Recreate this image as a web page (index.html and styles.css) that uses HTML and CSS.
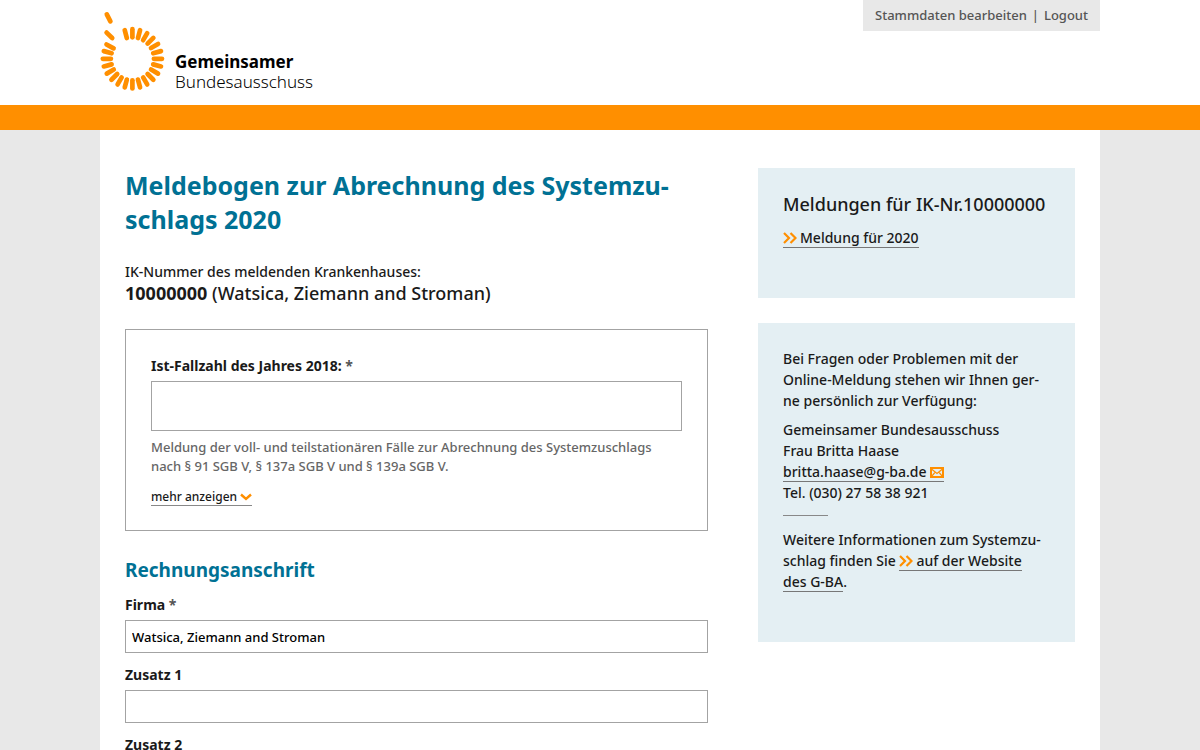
FILE: index.html
```
<!DOCTYPE html>
<html lang="de">
<head>
<meta charset="utf-8">
<meta name="viewport" content="width=device-width, initial-scale=1">
<title>Meldebogen zur Abrechnung des Systemzuschlags 2020</title>
<link rel="stylesheet" href="styles.css">
</head>
<body>
<header class="header">
  <div class="header-inner">
    <a class="logo" href="#">
      <svg class="logo-mark" viewBox="0 0 66 82" aria-hidden="true">
        <defs><path id="ray" d="M0-21.500V-29.600"/></defs>
        <g class="logo-rays" transform="translate(32.400 48.800)">
          <use href="#ray"/>
          <use href="#ray" transform="rotate(15)"/>
          <use href="#ray" transform="rotate(30)"/>
          <use href="#ray" transform="rotate(45)"/>
          <use href="#ray" transform="rotate(60)"/>
          <use href="#ray" transform="rotate(75)"/>
          <use href="#ray" transform="rotate(90)"/>
          <use href="#ray" transform="rotate(105)"/>
          <use href="#ray" transform="rotate(120)"/>
          <use href="#ray" transform="rotate(135)"/>
          <use href="#ray" transform="rotate(150)"/>
          <use href="#ray" transform="rotate(165)"/>
          <use href="#ray" transform="rotate(180)"/>
          <use href="#ray" transform="rotate(195)"/>
          <use href="#ray" transform="rotate(210)"/>
          <use href="#ray" transform="rotate(225)"/>
          <use href="#ray" transform="rotate(240)"/>
          <use href="#ray" transform="rotate(255)"/>
          <use href="#ray" transform="rotate(270)"/>
          <use href="#ray" transform="rotate(285)"/>
          <use href="#ray" transform="rotate(299)"/>
          <use href="#ray" transform="rotate(345)"/>
          <path d="M-20.200-20.800l-5.600-5.400M-22-37.400l-3.600-7"/>
        </g>
      </svg>
      <span class="logo-text"><strong>Gemeinsamer</strong><span>Bundesausschuss</span></span>
    </a>
    <nav class="meta-nav">
      <a href="#">Stammdaten bearbeiten</a><span>|</span><a href="#">Logout</a>
    </nav>
  </div>
</header>
<div class="page">
  <main class="content">
    <h1>Meldebogen zur Abrechnung des Systemzu&shy;schlags 2020</h1>
    <p class="hospital">IK-Nummer des meldenden Krankenhauses:
      <span class="hospital-name"><strong>10000000</strong> (Watsica, Ziemann and Stroman)</span></p>
    <form>
      <section class="case-box">
        <label for="cases">Ist-Fallzahl des Jahres 2018: <span class="required">*</span></label>
        <input class="tall" id="cases" type="text">
        <p class="hint">Meldung der voll- und teilstationären Fälle zur Abrechnung des Systemzuschlags nach § 91 SGB V, § 137a SGB V und § 139a SGB V.</p>
        <button class="more" type="button">mehr anzeigen <svg class="icon-down" viewBox="0 0 12 8" aria-hidden="true"><path d="M1 1.500l5 4.500 5-4.500"/></svg></button>
      </section>
      <h2>Rechnungsanschrift</h2>
      <div class="field">
        <label for="company">Firma <span class="required">*</span></label>
        <input id="company" type="text" value="Watsica, Ziemann and Stroman">
      </div>
      <div class="field">
        <label for="extra1">Zusatz 1</label>
        <input id="extra1" type="text">
      </div>
      <div class="field">
        <label for="extra2">Zusatz 2</label>
        <input id="extra2" type="text">
      </div>
    </form>
  </main>
  <aside class="sidebar">
    <section class="panel">
      <h3>Meldungen für IK-Nr.10000000</h3>
      <a class="link" href="#"><svg class="icon-next" viewBox="0 0 14 12" aria-hidden="true"><path d="M1 1l5 5-5 5M7.500 1l5 5-5 5"/></svg>Meldung für 2020</a>
    </section>
    <section class="panel">
      <p>Bei Fragen oder Problemen mit der Online-Meldung stehen wir Ihnen ger&shy;ne persönlich zur Verfügung:</p>
      <p>Gemeinsamer Bundesausschuss<br>Frau Britta Haase<br>
        <a class="link" href="#">britta.haase@g-ba.de <svg class="icon-mail" viewBox="0 0 14 11" aria-hidden="true"><path d="M1 1h12v9H1z"/><path class="flap" d="M1.500 2L7 6.500 12.500 2M1.500 9.500L5.200 5.200M12.500 9.500L8.800 5.200"/></svg></a><br>
        Tel. (030) 27 58 38 921</p>
      <hr>
      <p>Weitere Informationen zum Systemzu&shy;schlag finden Sie <a class="link" href="#"><svg class="icon-next" viewBox="0 0 14 12" aria-hidden="true"><path d="M1 1l5 5-5 5M7.500 1l5 5-5 5"/></svg>auf der Website des&nbsp;G-BA</a>.</p>
    </section>
  </aside>
</div>
</body>
</html>
```
FILE: styles.css
```
* { box-sizing: border-box; }
body {
  margin: 0;
  background: #e8e8e8;
  color: #1a1a1a;
  font: 500 14px/21px "Noto Sans", "Open Sans", sans-serif;
}
h1, h2, h3, p { margin: 0; }
a { color: inherit; text-decoration: none; }

.header { background: #fff; border-bottom: 25px solid #ff8f00; }
.header-inner {
  display: flex;
  justify-content: space-between;
  align-items: flex-start;
  max-width: 1000px;
  min-height: 105px;
  margin: 0 auto;
}
.logo { display: flex; align-items: flex-end; gap: 9px; padding-top: 10px; color: #000; }
.logo-mark { width: 66px; height: 82px; }
.logo-rays { fill: none; stroke: #ff8f00; stroke-width: 4.700; stroke-linecap: round; }
.logo-text { display: grid; font-size: 17px; line-height: 20px; }
.logo-text span { font-weight: 300; }
.meta-nav {
  display: flex;
  gap: 5px;
  padding: 5px 12px;
  background: #e8e8e8;
  color: #555;
  font-size: 13px;
}

.page {
  display: grid;
  grid-template-columns: minmax(0, 583fr) minmax(0, 317fr);
  gap: 50px;
  max-width: 1000px;
  margin: 0 auto;
  padding: 38px 25px;
  background: #fff;
}
h1, h2 { color: #007194; font-weight: 700; }
h1 { font-size: 25px; line-height: 34px; }
h2 { margin: 25px 0 10px; font-size: 19px; line-height: 28px; }
.hospital { margin: 25px 0 24px; }
.hospital-name { display: block; font-size: 18px; line-height: 23px; }

.case-box { padding: 25px 25px 24px; border: 1px solid #a3a3a3; }
label { display: block; margin-bottom: 5px; font-weight: 700; }
.required { color: #555; }
input {
  display: block;
  width: 100%;
  height: 33px;
  padding: 0 6px;
  border: 1px solid #a3a3a3;
  border-radius: 0;
  background: #fff;
  color: #000;
  font: inherit;
  font-size: 13px;
}
.tall { height: 50px; }
.field { margin-bottom: 11px; }
.hint { margin: 7px 0 9px; color: #666; font-size: 13px; line-height: 19px; }
.more {
  padding: 0;
  border: 0;
  border-bottom: 1px solid #888;
  background: none;
  color: inherit;
  font: 500 12px/17px "Noto Sans", "Open Sans", sans-serif;
}
.icon-down, .icon-next, .icon-mail { fill: none; stroke: #ff8f00; }
.icon-down { width: 12px; height: 8px; stroke-width: 2.400; }
.icon-next { width: 14px; height: 12px; margin-right: 3px; stroke-width: 2.200; vertical-align: -1px; }
.icon-mail { width: 14px; height: 11px; stroke-width: 2; vertical-align: -1px; }
.flap { stroke-width: 1.200; }

.sidebar { display: grid; gap: 25px; align-content: start; }
.panel { padding: 25px 25px 50px; background: #e4eff3; }
h3 { margin-bottom: 12px; font-size: 18px; font-weight: 500; line-height: 22px; }
.link { border-bottom: 1px solid #777; }
.panel p + p { margin-top: 8px; }
hr { width: 45px; margin: 12px 0 13px; border: 0; border-top: 1px solid #888; }
```
